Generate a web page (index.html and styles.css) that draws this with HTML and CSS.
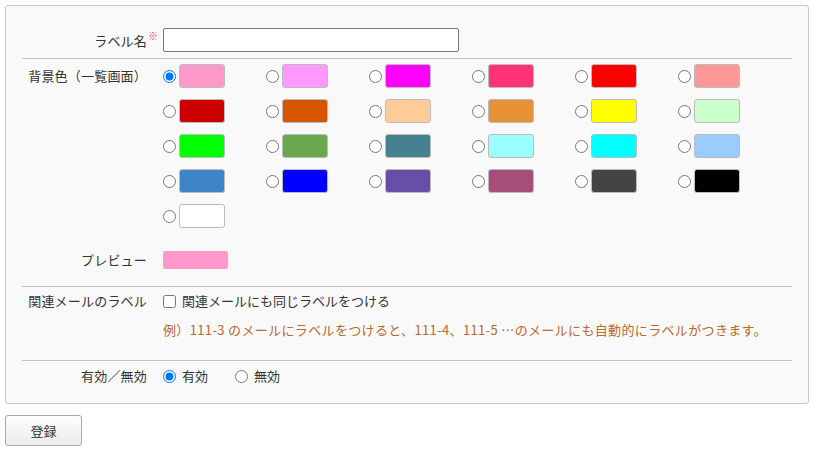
FILE: index.html
```html
<!DOCTYPE html>
<html lang="ja">
  <head>
    <meta charset="utf-8" />
    <title>ラベル登録</title>
    <link rel="stylesheet" href="styles.css">
  </head>
  <body>
    <form class="label-form">
      <div class="panel">
        <!-- ラベル名 -->
        <div class="section section-name">
          <div class="row row-center">
            <div class="label">ラベル名<span class="req">※</span></div>
            <div class="field"><input type="text" class="text-input" /></div>
          </div>
        </div>

        <!-- 背景色 -->
        <div class="section section-color">
          <div class="row">
            <div class="label label-top">背景色（一覧画面）</div>
            <div class="field">
              <div class="swatches">
                <label class="swatch-item"><input type="radio" name="color" checked /><span class="swatch" style="background:#ff99cc"></span></label>
                <label class="swatch-item"><input type="radio" name="color" /><span class="swatch" style="background:#ff99ff"></span></label>
                <label class="swatch-item"><input type="radio" name="color" /><span class="swatch" style="background:#ff00ff"></span></label>
                <label class="swatch-item"><input type="radio" name="color" /><span class="swatch" style="background:#ff3377"></span></label>
                <label class="swatch-item"><input type="radio" name="color" /><span class="swatch" style="background:#ff0000"></span></label>
                <label class="swatch-item"><input type="radio" name="color" /><span class="swatch" style="background:#ff9999"></span></label>

                <label class="swatch-item"><input type="radio" name="color" /><span class="swatch" style="background:#cc0000"></span></label>
                <label class="swatch-item"><input type="radio" name="color" /><span class="swatch" style="background:#d55500"></span></label>
                <label class="swatch-item"><input type="radio" name="color" /><span class="swatch" style="background:#ffcc99"></span></label>
                <label class="swatch-item"><input type="radio" name="color" /><span class="swatch" style="background:#e69138"></span></label>
                <label class="swatch-item"><input type="radio" name="color" /><span class="swatch" style="background:#ffff00"></span></label>
                <label class="swatch-item"><input type="radio" name="color" /><span class="swatch" style="background:#ccffcc"></span></label>

                <label class="swatch-item"><input type="radio" name="color" /><span class="swatch" style="background:#00ff00"></span></label>
                <label class="swatch-item"><input type="radio" name="color" /><span class="swatch" style="background:#6aa84f"></span></label>
                <label class="swatch-item"><input type="radio" name="color" /><span class="swatch" style="background:#45818e"></span></label>
                <label class="swatch-item"><input type="radio" name="color" /><span class="swatch" style="background:#99ffff"></span></label>
                <label class="swatch-item"><input type="radio" name="color" /><span class="swatch" style="background:#00ffff"></span></label>
                <label class="swatch-item"><input type="radio" name="color" /><span class="swatch" style="background:#99ccff"></span></label>

                <label class="swatch-item"><input type="radio" name="color" /><span class="swatch" style="background:#3d85c6"></span></label>
                <label class="swatch-item"><input type="radio" name="color" /><span class="swatch" style="background:#0000ff"></span></label>
                <label class="swatch-item"><input type="radio" name="color" /><span class="swatch" style="background:#674ea7"></span></label>
                <label class="swatch-item"><input type="radio" name="color" /><span class="swatch" style="background:#a64d79"></span></label>
                <label class="swatch-item"><input type="radio" name="color" /><span class="swatch" style="background:#444444"></span></label>
                <label class="swatch-item"><input type="radio" name="color" /><span class="swatch" style="background:#000000"></span></label>

                <label class="swatch-item"><input type="radio" name="color" /><span class="swatch" style="background:#ffffff"></span></label>
              </div>
            </div>
          </div>
          <div class="row row-center preview-row">
            <div class="label">プレビュー</div>
            <div class="field"><div class="preview" style="background:#ff99cc"></div></div>
          </div>
        </div>

        <!-- 関連メール -->
        <div class="section section-related">
          <div class="row">
            <div class="label">関連メールのラベル</div>
            <div class="field">
              <label class="check-line"><input type="checkbox" />関連メールにも同じラベルをつける</label>
              <p class="note">例）111-3 のメールにラベルをつけると、111-4、111-5 …のメールにも自動的にラベルがつきます。</p>
            </div>
          </div>
        </div>

        <!-- 有効／無効 -->
        <div class="section section-status">
          <div class="row row-center">
            <div class="label">有効／無効</div>
            <div class="field radios">
              <label class="radio-line"><input type="radio" name="status" checked />有効</label>
              <label class="radio-line"><input type="radio" name="status" />無効</label>
            </div>
          </div>
        </div>
      </div>

      <button type="button" class="submit">登録</button>
    </form>
  </body>
</html>
```

FILE: styles.css
```css
/* 基本 */
* {
  margin: 0;
  padding: 0;
  box-sizing: border-box;
}

body {
  padding: 5px 8px 5px 5px;
  background: #fff;
  color: #333;
  font-family: "Noto Sans CJK JP", "Noto Sans", sans-serif;
  font-size: 13px;
  line-height: 18px;
}

/* 枠 */
.panel {
  border: 1px solid #c8c8c8;
  border-radius: 3px;
  background: #f9f9f9;
  padding: 16px 16px 12px;
}

.section {
  border-bottom: 1px solid #c4c4c4;
}

.section:last-child {
  border-bottom: none;
}

.section-name {
  padding: 6px 0;
}

.section-color {
  padding: 5px 0 17px;
}

.section-related {
  padding: 5px 0 21px;
}

.section-status {
  padding: 6px 0;
}

/* 行 */
.row {
  display: grid;
  grid-template-columns: 125px 1fr;
  column-gap: 16px;
  align-items: start;
}

.row-center {
  align-items: center;
}

.label {
  text-align: right;
  white-space: nowrap;
  letter-spacing: 0.2px;
}

.label-top {
  padding-top: 3px;
}

.req {
  color: #e0407a;
  font-size: 10px;
  vertical-align: 6px;
  line-height: 1;
  letter-spacing: 0;
  margin-left: 1px;
  margin-right: -11px;
}

/* 入力欄 */
.text-input {
  display: block;
  width: 296px;
  height: 24px;
  border: 1px solid #767676;
  border-radius: 2px;
  background: #fff;
  padding: 0 4px;
  font: inherit;
}

/* 背景色 */
.swatches {
  display: grid;
  grid-template-columns: repeat(6, 103px);
  row-gap: 11px;
}

.swatch-item {
  display: flex;
  align-items: center;
  gap: 3px;
}

.swatch-item input {
  width: 13px;
  height: 13px;
  margin: 0;
}

.swatch {
  display: block;
  width: 46px;
  height: 24px;
  border: 1px solid #bbb;
  border-radius: 3px;
}

.preview-row {
  margin-top: 23px;
}

.preview {
  width: 65px;
  height: 18px;
  border-radius: 2px;
}

/* 関連メール */
.check-line,
.radio-line {
  display: flex;
  align-items: center;
  gap: 6px;
}

.check-line input,
.radio-line input {
  width: 13px;
  height: 13px;
  margin: 0;
}

.note {
  margin-top: 11px;
  color: #b8692f;
  white-space: nowrap;
  letter-spacing: 0.35px;
}

/* 有効／無効 */
.radios {
  display: flex;
  gap: 27px;
}

/* ボタン */
.submit {
  display: block;
  margin-top: 11px;
  width: 77px;
  height: 31px;
  border: 1px solid #a9a9a9;
  border-radius: 3px;
  background: linear-gradient(#fdfdfd, #ececec);
  color: #333;
  font: inherit;
}
```
